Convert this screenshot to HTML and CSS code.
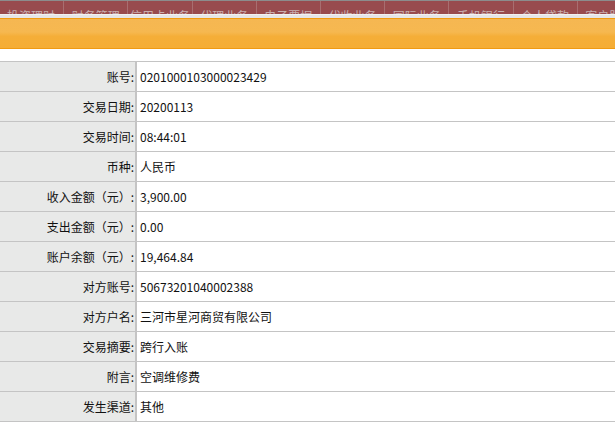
FILE: index.html
```html
<!DOCTYPE html>
<html lang="zh">
<head>
<meta charset="utf-8">
<link rel="stylesheet" href="styles.css">
</head>
<body>
<div class="topnav">
  <div class="nav-item">投资理财</div>
  <div class="nav-item">财务管理</div>
  <div class="nav-item">信用卡业务</div>
  <div class="nav-item">代理业务</div>
  <div class="nav-item">电子票据</div>
  <div class="nav-item">代收业务</div>
  <div class="nav-item">国际业务</div>
  <div class="nav-item">手机银行</div>
  <div class="nav-item">个人贷款</div>
  <div class="nav-item">客户服务</div>
</div>
<div class="strip"></div>
<div class="titlebar"></div>
<table class="detail">
  <tr><th>账号:</th><td>0201000103000023429</td></tr>
  <tr><th>交易日期:</th><td>20200113</td></tr>
  <tr><th>交易时间:</th><td>08:44:01</td></tr>
  <tr><th>币种:</th><td>人民币</td></tr>
  <tr><th>收入金额（元）:</th><td>3,900.00</td></tr>
  <tr><th>支出金额（元）:</th><td>0.00</td></tr>
  <tr><th>账户余额（元）:</th><td>19,464.84</td></tr>
  <tr><th>对方账号:</th><td>50673201040002388</td></tr>
  <tr><th>对方户名:</th><td>三河市星河商贸有限公司</td></tr>
  <tr><th>交易摘要:</th><td>跨行入账</td></tr>
  <tr><th>附言:</th><td>空调维修费</td></tr>
  <tr><th>发生渠道:</th><td>其他</td></tr>
</table>
</body>
</html>
```
FILE: styles.css
```css
html, body {
  margin: 0;
  padding: 0;
  background: #ffffff;
  font-family: "Noto Sans CJK SC", "Noto Sans", sans-serif;
  font-size: 12px;
  color: #111111;
  overflow: hidden;
}
.topnav {
  height: 13px;
  border-top: 1px solid #8c8c8c;
  background: #984b4e;
  display: flex;
  overflow: hidden;
  margin-left: -1px;
}
.nav-item {
  flex: 0 0 64.2px;
  box-sizing: border-box;
  border-left: 1px solid #a86e70;
  color: #c9aeae;
  font-size: 12px;
  line-height: 12px;
  padding-top: 9px;
  text-align: center;
  height: 13px;
  overflow: hidden;
}
.nav-item:first-child {
  border-left: none;
}
.strip {
  height: 3px;
  background: #e6e6e6;
  border-top: 1px solid #f2f2f2;
}
.titlebar {
  height: 29px;
  border-top: 1px solid #f09a12;
  border-bottom: 1px solid #f09a12;
  background: linear-gradient(#f5b752 0%, #f6b850 45%, #f5ae38 60%, #f5ad35 100%);
}
.detail {
  margin-top: 12px;
  width: 615px;
  border-collapse: collapse;
}
.detail th,
.detail td {
  height: 29px;
  padding: 0;
  border-top: 1px solid #c4c4c4;
  border-bottom: 1px solid #c4c4c4;
  font-weight: normal;
  vertical-align: middle;
}
.detail th {
  width: 134px;
  background: #e8e9e8;
  text-align: right;
  padding-right: 1px;
  border-right: 2px solid #c4c4c4;
  white-space: nowrap;
}
.detail td {
  padding-left: 3px;
  text-align: left;
}
```
